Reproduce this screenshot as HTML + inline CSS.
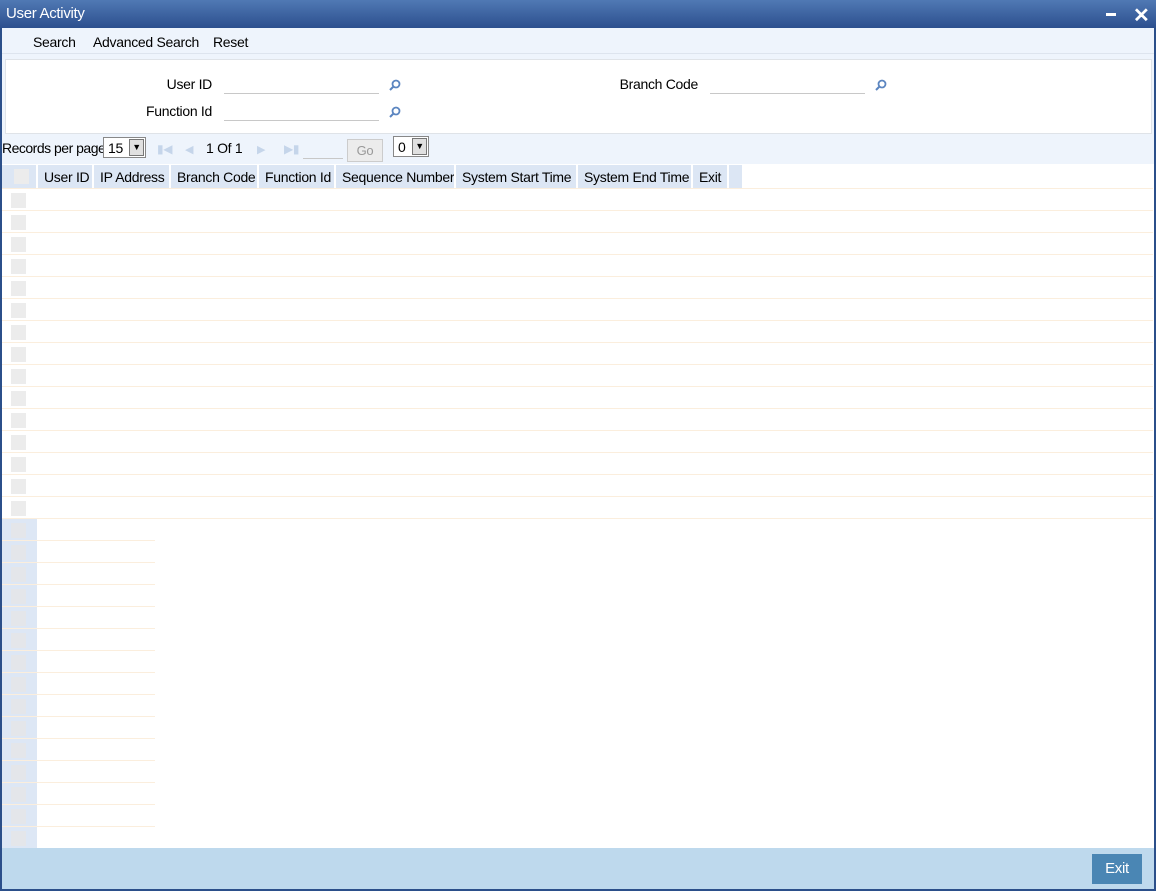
<!DOCTYPE html>
<html><head><style>
*{margin:0;padding:0;box-sizing:border-box}
body{width:1156px;height:891px;position:relative;font-family:"Liberation Sans",Arial,sans-serif;font-size:14px;letter-spacing:-0.3px;color:#000;background:#fff;overflow:hidden}
.a{position:absolute}
.title{left:0;top:0;width:1156px;height:28px;background:linear-gradient(#5079b4,#2c4f8e);color:#fff;font-size:15px;padding:5px 6px}
.line{height:1px;background:#fbeedd}
.hd{top:165px;height:23px;background:#dce6f4;border-right:2px solid #fff;padding:4px 0 0 6px;white-space:nowrap;overflow:hidden}
.cb{width:15px;height:15px;background:#ececec}
.u{height:1px;background:#c8c8c8}
.r{text-align:right;width:150px}
</style></head><body>
<div class="a title">User Activity</div>
<div class="a" style="left:0;top:28px;width:2px;height:863px;background:#2b4f8a"></div>
<div class="a" style="left:1154px;top:28px;width:2px;height:863px;background:#2b4f8a"></div>
<div class="a" style="left:0;top:889px;width:1156px;height:2px;background:#2b4f8a"></div>
<div class="a" style="left:1106px;top:13px;width:10px;height:3px;background:#fff"></div>
<div class="a" style="left:1133px;top:3px;color:#fff;font-size:20px;font-weight:bold">✕</div>
<div class="a" style="left:2px;top:28px;width:1152px;height:136px;background:#eef4fc"></div>
<div class="a" style="left:33px;top:34px">Search</div>
<div class="a" style="left:93px;top:34px">Advanced Search</div>
<div class="a" style="left:213px;top:34px">Reset</div>
<div class="a" style="left:2px;top:53px;width:1152px;height:1px;background:#dde4ee"></div>
<div class="a" style="left:5px;top:59px;width:1147px;height:75px;background:#fff;border:1px solid #dfe3e8"></div>
<div class="a r" style="left:62px;top:76px">User ID</div>
<div class="a r" style="left:62px;top:103px">Function Id</div>
<div class="a r" style="left:548px;top:76px">Branch Code</div>
<div class="a u" style="left:224px;top:93px;width:155px"></div>
<div class="a u" style="left:224px;top:120px;width:155px"></div>
<div class="a u" style="left:710px;top:93px;width:155px"></div>
<svg class="a" style="left:389px;top:79px" width="12" height="12"><circle cx="7" cy="5" r="3.5" fill="none" stroke="#5b85c0" stroke-width="1.8"/><line x1="4.5" y1="7.5" x2="1" y2="11" stroke="#5b85c0" stroke-width="2"/></svg>
<svg class="a" style="left:389px;top:106px" width="12" height="12"><circle cx="7" cy="5" r="3.5" fill="none" stroke="#5b85c0" stroke-width="1.8"/><line x1="4.5" y1="7.5" x2="1" y2="11" stroke="#5b85c0" stroke-width="2"/></svg>
<svg class="a" style="left:875px;top:79px" width="12" height="12"><circle cx="7" cy="5" r="3.5" fill="none" stroke="#5b85c0" stroke-width="1.8"/><line x1="4.5" y1="7.5" x2="1" y2="11" stroke="#5b85c0" stroke-width="2"/></svg>
<div class="a" style="left:2px;top:140px;letter-spacing:-0.5px">Records per page</div>
<div class="a" style="left:103px;top:137px;width:43px;height:21px;background:#fff;border:1px solid #888;padding:2px 4px">15</div>
<div class="a" style="left:129px;top:139px;width:15px;height:17px;background:#e0e0e0;border:1px solid #777;font-size:9px;text-align:center;line-height:15px">▼</div>
<div class="a" style="left:157px;top:142px;color:#c5d5ea;font-size:12px">▮◀</div>
<div class="a" style="left:185px;top:143px;color:#c5d5ea;font-size:11px">◀</div>
<div class="a" style="left:206px;top:140px">1 Of 1</div>
<div class="a" style="left:257px;top:143px;color:#c5d5ea;font-size:11px">▶</div>
<div class="a" style="left:284px;top:142px;color:#c5d5ea;font-size:12px">▶▮</div>
<div class="a u" style="left:303px;top:158px;width:40px"></div>
<div class="a" style="left:347px;top:139px;width:36px;height:23px;background:#ececec;border:1px solid #ccc;color:#999;text-align:center;line-height:21px;font-size:13px">Go</div>
<div class="a" style="left:393px;top:136px;width:36px;height:21px;background:#fff;border:1px solid #888;padding:2px 4px">0</div>
<div class="a" style="left:412px;top:138px;width:15px;height:17px;background:#e0e0e0;border:1px solid #777;font-size:9px;text-align:center;line-height:15px">▼</div>
<div class="a hd" style="left:2px;width:36px"><div class="cb" style="margin:0 0 0 6px"></div></div>
<div class="a hd" style="left:38px;width:56px">User ID</div>
<div class="a hd" style="left:94px;width:77px">IP Address</div>
<div class="a hd" style="left:171px;width:88px">Branch Code</div>
<div class="a hd" style="left:259px;width:77px">Function Id</div>
<div class="a hd" style="left:336px;width:120px">Sequence Number</div>
<div class="a hd" style="left:456px;width:122px">System Start Time</div>
<div class="a hd" style="left:578px;width:115px">System End Time</div>
<div class="a hd" style="left:693px;width:36px">Exit</div>
<div class="a hd" style="left:729px;width:13px;border:none"></div>
<div id="g"></div>
<div class="a" style="left:2px;top:848px;width:1152px;height:41px;background:#bed9ed"></div>
<div class="a" style="left:1092px;top:854px;width:50px;height:30px;background:#4a86b4;color:#fff;font-size:15px;text-align:center;line-height:30px">Exit</div>
<script>
var g=document.getElementById('g'),h='';
for(var i=0;i<15;i++){var y=188+i*22;h+='<div class="a line" style="left:2px;top:'+y+'px;width:1151px"></div><div class="a cb" style="left:11px;top:'+(y+5)+'px"></div>';}
h+='<div class="a line" style="left:2px;top:518px;width:1151px"></div>';
for(var i=0;i<15;i++){var y=519+i*22;h+='<div class="a" style="left:2px;top:'+y+'px;width:35px;height:21px;background:#dde7f5"></div><div class="a cb" style="left:11px;top:'+(y+4)+'px;background:#e4e6ea"></div><div class="a line" style="left:2px;top:'+(y+21)+'px;width:153px"></div>';}
g.innerHTML=h;
</script>
</body></html>
